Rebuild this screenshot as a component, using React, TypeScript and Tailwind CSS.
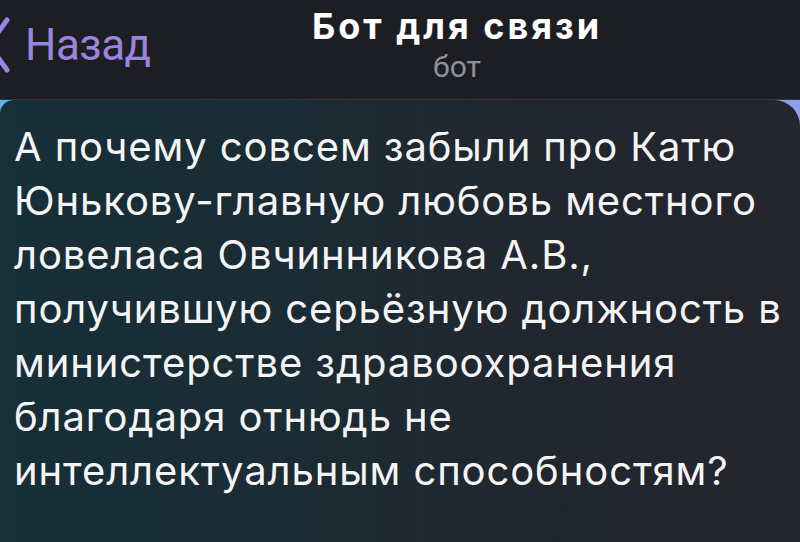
import React from "react";

export default function App() {
  const lines = [
    "А почему совсем забыли про Катю",
    "Юнькову-главную любовь местного",
    "ловеласа Овчинникова А.В.,",
    "получившую серьёзную должность в",
    "министерстве здравоохранения",
    "благодаря отнюдь не",
    "интеллектуальным способностям?",
  ];
  return (
    <div className="w-[800px] h-[542px] overflow-hidden flex flex-col bg-[#1e1f24]" style={{ fontFamily: "Inter, Roboto, sans-serif" }}>
      <div className="h-[100px] shrink-0 flex items-start relative border-b border-[#34363c] bg-[#1d1e23]">
        <div className="absolute left-0 top-[16px] flex items-center">
          <svg width="12" height="58" viewBox="0 0 12 58" className="-ml-[2px]">
            <path d="M9 4 L-9 29 L9 54" stroke="#9b83de" strokeWidth="5" fill="none" strokeLinecap="round" strokeLinejoin="round" />
          </svg>
          <span className="ml-[15px] text-[44px] leading-none text-[#9b83de] tracking-[-0.5px]" style={{ fontFamily: "Roboto, sans-serif" }}>Назад</span>
        </div>
        <div className="ml-[290px] w-[334px] flex flex-col items-center pt-[5px]">
          <div className="text-[36px] leading-[42px] font-bold text-white tracking-[3px]">Бот для связи</div>
          <div className="mt-[3px] text-[30px] leading-[34px] text-[#909196]" style={{ fontFamily: "Roboto, sans-serif" }}>бот</div>
        </div>
      </div>
      <div className="flex-1 relative bg-[linear-gradient(90deg,#5ab5ea_0%,#6aa5ec_50%,#8c9ff2_100%)]">
        <div className="absolute inset-0 rounded-tl-[14px] rounded-tr-[26px] bg-[linear-gradient(90deg,#162f38_0%,#1b2c34_35%,#21262e_70%,#24252d_100%)]" />
        <div className="relative pl-[14px] pt-[20px] text-[40px] leading-[54px] text-[#f4f4f4] tracking-[0.9px]">
          {lines.map((l, i) => (
            <div key={i} className="whitespace-nowrap">{l}</div>
          ))}
        </div>
      </div>
    </div>
  );
}
